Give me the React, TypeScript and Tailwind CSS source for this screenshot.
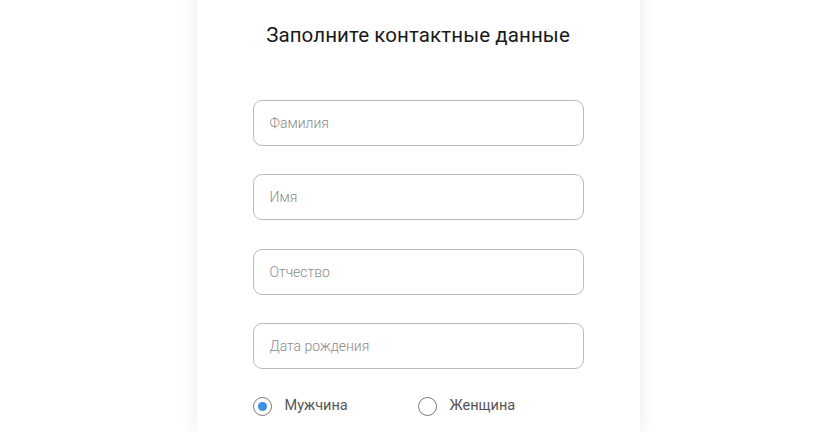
import { useState } from "react";

const fields = ["Фамилия", "Имя", "Отчество", "Дата рождения"];

function Radio({ checked, label, onClick }: { checked: boolean; label: string; onClick: () => void }) {
  return (
    <button type="button" onClick={onClick} className="flex items-center gap-[13px]">
      <span className="w-[19px] h-[19px] rounded-full border border-[#7a7a7a] flex items-center justify-center">
        {checked && <span className="w-[9px] h-[9px] rounded-full bg-[#3d8fe0]" />}
      </span>
      <span className="text-[14.5px] text-[#555] leading-none">{label}</span>
    </button>
  );
}

export default function App() {
  const [gender, setGender] = useState<"m" | "f">("m");

  return (
    <div className="h-screen bg-white flex justify-center overflow-hidden" style={{ fontFamily: "Roboto, 'Noto Sans', sans-serif" }}>
      <div className="w-[443px] ml-[11px] -mt-[20px] bg-white shadow-[0_0_18px_rgba(0,0,0,0.09)] pt-[41px] pb-10 flex flex-col items-center">
        <h1 className="text-[20.5px] leading-7 text-[#1a1a1a] font-normal tracking-[0.1px]">
          Заполните контактные данные
        </h1>

        <div className="mt-[51px] w-[331px] flex flex-col gap-[28.3px]">
          {fields.map((f) => (
            <input
              key={f}
              placeholder={f}
              className="h-[46px] w-full rounded-[9px] border border-[#bcbcbc] px-[16px] text-[14px] text-[#333] placeholder:text-[#8a8a8a] placeholder:font-light focus:outline-none"
            />
          ))}
        </div>

        <div className="mt-[28px] w-[331px] flex">
          <div className="w-[165px]">
            <Radio checked={gender === "m"} label="Мужчина" onClick={() => setGender("m")} />
          </div>
          <Radio checked={gender === "f"} label="Женщина" onClick={() => setGender("f")} />
        </div>
      </div>
    </div>
  );
}
